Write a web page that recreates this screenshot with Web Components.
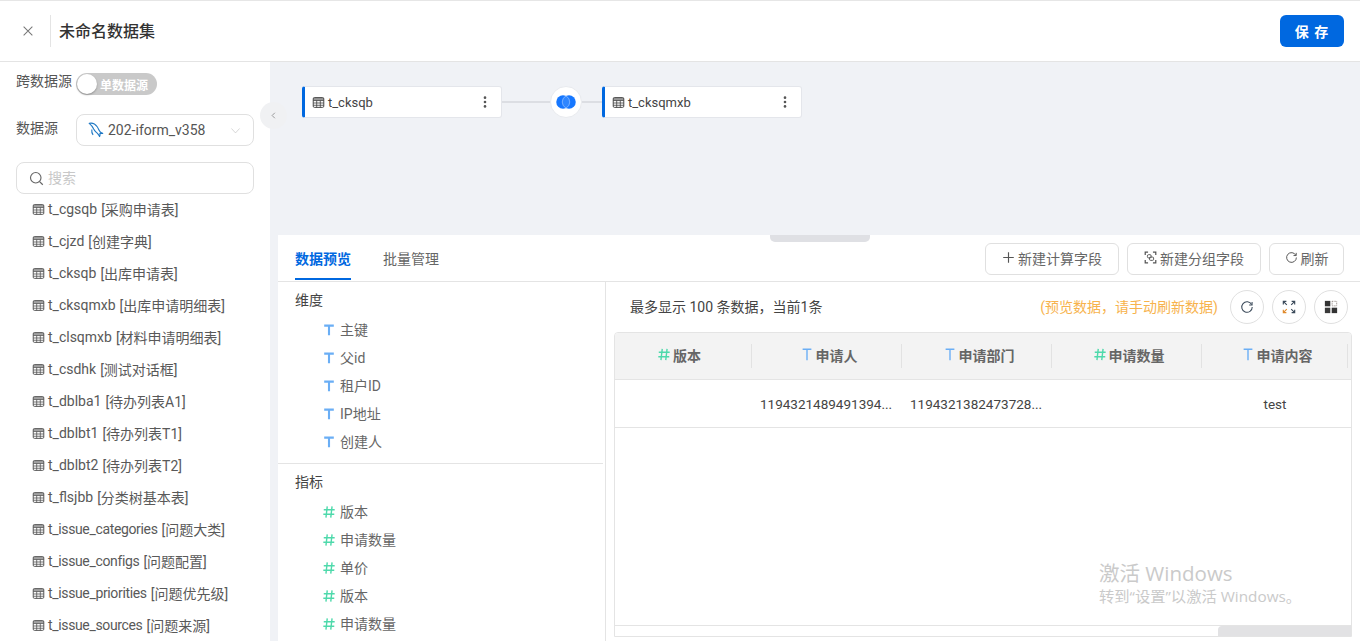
<!DOCTYPE html>
<html lang="zh">
<head>
<meta charset="utf-8">
<title>未命名数据集</title>
<style>
  html, body { margin: 0; height: 641px; overflow: hidden; background: #fff; }
  body { font-family: Roboto, "Noto Sans CJK SC", sans-serif; font-size: 14px; color: #333; }
</style>
</head>
<body>
<ds-app></ds-app>

<script>
// icon paths, all drawn on a 16 x 16 box
const ICONS = {
  close: '<path d="M3 3l10 10M13 3L3 13" stroke="currentColor" stroke-width="1.2" fill="none"/>',
  chevronDown: '<path d="M2 5l6 6.5L14 5" stroke="currentColor" stroke-width="1" fill="none"/>',
  chevronLeft: '<path d="M10 4L6 8l4 4" stroke="currentColor" stroke-width="1.2" fill="none"/>',
  search: '<circle cx="7.2" cy="7.2" r="5.6" stroke="currentColor" stroke-width="1.2" fill="none"/><path d="M11.3 11.3l3.4 3.4" stroke="currentColor" stroke-width="1.3" fill="none"/>',
  table: '<rect x="1.5" y="2" width="13" height="12" rx="1.5" stroke="currentColor" stroke-width="1.2" fill="none"/><path d="M1.5 5.6h13M1.5 8.6h13M1.5 11.4h13M5.8 5.6V14M10.2 5.6V14" stroke="currentColor" stroke-width="1" fill="none"/><rect x="1.5" y="2" width="13" height="3.4" fill="currentColor" opacity=".55"/>',
  dots: '<circle cx="8" cy="3" r="1.5" fill="currentColor"/><circle cx="8" cy="8" r="1.5" fill="currentColor"/><circle cx="8" cy="13" r="1.5" fill="currentColor"/>',
  dolphin: '<path d="M1.2 1.4c3-.8 6 .6 8 3.4 1.2 1.7 1.6 3.6 3 5 .7.7 1.6 1.2 2.6 1.6-1 .2-2 .1-2.9-.2.2 1 .1 2.4-.3 3.4-.5-1.2-1.2-2.3-2.2-3.3-1.5-1.5-2.8-2.3-3.7-4.3C4.9 5 3.2 3 1.2 1.4z" stroke="#1f78c4" stroke-width="1.1" fill="none" stroke-linejoin="round"/><path d="M3.8 7.5c-.3 2 .2 3.8 1.3 5.3" stroke="#1f78c4" stroke-width="1.1" fill="none"/>',
  plus: '<path d="M8 1.5v13M1.5 8h13" stroke="currentColor" stroke-width="1.4" fill="none"/>',
  group: '<path d="M5 1.5H1.5V5M11 1.5h3.5V5M5 14.5H1.5V11M11 14.5h3.5V11" stroke="currentColor" stroke-width="1.5" fill="none"/><rect x="4.2" y="4.5" width="4.6" height="4" rx="1.5" stroke="currentColor" stroke-width="1.2" fill="none"/><rect x="6.8" y="7.5" width="5" height="4" rx="1.2" stroke="currentColor" stroke-width="1.2" fill="none"/>',
  refresh: '<path d="M13.3 5.2A6 6 0 1 0 14 8" stroke="currentColor" stroke-width="1.2" fill="none"/><path d="M13.8 2.3v3.3h-3.3" stroke="currentColor" stroke-width="1.2" fill="none"/>',
  expand: '<g stroke="#3b4a5a" stroke-width="1.3" fill="none"><path d="M1.5 5V1.5H5M1.5 1.5L5.5 5.5"/><path d="M11 1.5h3.5V5M14.5 1.5l-4 4"/><path d="M14.5 11v3.5H11M14.5 14.5l-4-4"/></g><g stroke="#e08a2c" stroke-width="1.3" fill="none"><path d="M5 14.5H1.5V11M1.5 14.5l4-4"/></g>',
  grid: '<rect x="1" y="1" width="6.2" height="6.2" fill="#333"/><rect x="1" y="8.8" width="6.2" height="6.2" fill="#3a3a3a"/><rect x="8.8" y="8.8" width="6.2" height="6.2" fill="#333"/><rect x="9.3" y="1.5" width="5.2" height="5.2" fill="none" stroke="#8a7f7a" stroke-width="1" stroke-dasharray="1 .8"/>',
  text: '<path d="M2.5 3h11M8 3v11" stroke="#6aaef5" stroke-width="2.4" fill="none"/>',
  textThin: '<path d="M3 2h10M8 2v12.5" stroke="#6aaef5" stroke-width="1.6" fill="none"/>',
  number: '<path d="M6 1.5L4.5 14.5M11.5 1.5L10 14.5M2 5.5h12.5M1.5 10.5H14" stroke="#4ed9ab" stroke-width="1.6" fill="none"/>',
  join: '<circle cx="5.6" cy="8" r="5.4" fill="#1677ff"/><circle cx="10.4" cy="8" r="5.4" fill="#1677ff"/><path d="M8 3.16a5.4 5.4 0 0 1 0 9.68 5.4 5.4 0 0 1 0-9.68z" fill="#2f86ff" stroke="#a9ccff" stroke-width=".5"/>'
};

// defines an element whose shadow root comes from a css + html pair
function define(tag, css, html, setup) {
  customElements.define(tag, class extends HTMLElement {
    constructor() {
      super();
      this.attachShadow({ mode: 'open' });
    }
    connectedCallback() {
      const markup = typeof html === 'function' ? html(this) : html;
      this.shadowRoot.innerHTML = `<style>${css}</style>${markup}`;
      if (setup) setup(this);
    }
  });
}

define('ds-icon', `
  :host { display: inline-flex; flex: none; }
  svg { display: block; width: 100%; height: 100%; }
`, el => `<svg viewBox="0 0 16 16" aria-hidden="true">${ICONS[el.getAttribute('name')]}</svg>`);

define('ds-header', `
  :host { display: flex; align-items: center; height: 60px; border-top: 1px solid #e6e6e6; border-bottom: 1px solid #e4e4e4; background: #fff; padding-left: 21px; padding-right: 16px; }
  ds-icon { width: 14px; height: 14px; color: #777; }
  .sep { width: 1px; height: 32px; background: #e4e4e4; margin: 0 8px 0 15px; }
  h1 { margin: 0 0 2px; font-size: 16px; font-weight: 500; color: #333; flex: 1; }
  button { width: 64px; height: 32px; border: 0; border-radius: 6px; background: #0068e0; color: #fff; font: 700 14px Roboto, "Noto Sans CJK SC", sans-serif; letter-spacing: 1px; padding: 0; }
`, `
  <ds-icon name="close"></ds-icon>
  <div class="sep"></div>
  <h1>未命名数据集</h1>
  <button>保 存</button>
`);

define('ds-table-item', `
  :host { display: flex; align-items: center; height: 32px; padding: 0 0 2px 32px; box-sizing: border-box; color: #595959; font-size: 14px; white-space: nowrap; }
  ds-icon { width: 13px; height: 13px; margin-right: 3px; color: #555; }
  .name { margin-right: 4px; }
  :host([tight]) .name { letter-spacing: -.35px; }
`, el => `<ds-icon name="table"></ds-icon><span class="name">${el.getAttribute('name')}</span><slot></slot>`);

define('ds-sidebar', `
  :host { display: block; width: 270px; height: 579px; background: #fff; overflow: hidden; box-sizing: border-box; padding-top: 11px; position: relative; }
  .row { display: flex; align-items: center; padding-left: 16px; color: #555; }
  .label { width: 60px; white-space: nowrap; margin-top: -8px; }
  .label.ds { margin-top: -7px; }
  .switch { position: relative; display: flex; align-items: center; width: 81px; height: 22px; border-radius: 11px; background: #c9c9c9; color: #fff; font-size: 12px; font-weight: 700; padding-left: 24px; box-sizing: border-box; }
  .switch i { position: absolute; left: 1px; top: 1px; width: 20px; height: 20px; border-radius: 50%; background: #fff; box-shadow: 0 1px 2px rgba(0,0,0,.3); }
  .select { display: flex; align-items: center; width: 178px; height: 32px; box-sizing: border-box; border: 1px solid #e0e0e0; border-radius: 8px; padding: 0 12px 0 11px; color: #555; }
  .select ds-icon:first-child { width: 16px; height: 16px; margin-right: 4px; }
  .select span { flex: 1; }
  .select ds-icon:last-child { width: 11px; height: 11px; color: #c4c4c4; }
  .search { display: flex; align-items: center; width: 238px; height: 32px; box-sizing: border-box; border: 1px solid #e0e0e0; border-radius: 8px; margin: 16px 0 0 16px; padding-left: 12px; color: #c8c8c8; }
  .search ds-icon { width: 15px; height: 15px; margin-right: 4px; color: #666; }
  .search span { margin-bottom: 2px; }
`, `
  <div class="row"><span class="label">跨数据源</span><div class="switch"><i></i>单数据源</div></div>
  <div class="row" style="margin-top:19px">
    <span class="label ds">数据源</span>
    <div class="select"><ds-icon name="dolphin"></ds-icon><span>202-iform_v358</span><ds-icon name="chevronDown"></ds-icon></div>
  </div>
  <div class="search"><ds-icon name="search"></ds-icon><span>搜索</span></div>
  <slot></slot>
`);

define('ds-node', `
  :host { display: flex; align-items: center; width: 200px; height: 32px; box-sizing: border-box; background: #fff; border: 1px solid #e4e6eb; border-left: 3px solid #0068e0; border-radius: 3px; padding: 0 9px 0 7px; font-size: 13px; color: #444; flex: none; }
  ds-icon.t { width: 13px; height: 13px; margin-right: 3px; color: #444; }
  span { flex: 1; }
  ds-icon.m { width: 14px; height: 14px; color: #555; }
`, `<ds-icon class="t" name="table"></ds-icon><span><slot></slot></span><ds-icon class="m" name="dots"></ds-icon>`);

define('ds-canvas', `
  :host { display: flex; align-items: center; height: 173px; box-sizing: border-box; padding: 24px 0 117px 32px; }
  .line { height: 2px; background: #dcdee3; flex: none; }
  .join { width: 32px; height: 32px; border-radius: 50%; background: #fff; border: 1px solid #e8eaee; box-sizing: border-box; display: flex; align-items: center; justify-content: center; flex: none; }
  .join ds-icon { width: 20px; height: 20px; }
`, `
  <ds-node>t_cksqb</ds-node>
  <div class="line" style="width:48px"></div>
  <div class="join"><ds-icon name="join"></ds-icon></div>
  <div class="line" style="width:20px"></div>
  <ds-node>t_cksqmxb</ds-node>
`);

define('ds-button', `
  :host { display: inline-flex; align-items: center; justify-content: center; height: 32px; box-sizing: border-box; border: 1px solid #e0e0e0; border-radius: 6px; background: #fff; color: #666; font-size: 14px; white-space: nowrap; padding-bottom: 3px; }
  ds-icon { width: 13px; height: 13px; margin-right: 3px; color: #555; }
`, el => `<ds-icon name="${el.getAttribute('icon')}"></ds-icon><slot></slot>`);

define('ds-round-button', `
  :host { display: flex; align-items: center; justify-content: center; width: 34px; height: 34px; box-sizing: border-box; border: 1px solid #e0e0e0; border-radius: 50%; color: #3b4a5a; flex: none; }
  ds-icon { width: 14px; height: 14px; }
`, el => `<ds-icon name="${el.getAttribute('icon')}"></ds-icon>`);

define('ds-field', `
  :host { display: flex; align-items: center; height: 28px; padding-left: 44px; color: #666; font-size: 14px; }
  ds-icon { width: 14px; height: 14px; margin-right: 4px; }
  span { margin-bottom: 2px; }
`, el => `<ds-icon name="${el.getAttribute('type')}"></ds-icon><span><slot></slot></span>`);

define('ds-field-group', `
  :host { display: block; padding-bottom: 7px; }
  :host(:not(:last-child)) { border-bottom: 1px solid #e4e4e4; }
  h3 { margin: 0 0 2px; padding: 4px 0 0 17px; height: 28px; line-height: 28px; font-size: 14px; font-weight: 400; color: #444; }
`, el => `<h3>${el.getAttribute('title')}</h3><slot></slot>`);

const TABLE_CSS = `
  :host { display: grid; grid-template-columns: 137px 150px 150px 150px 146px 1fr; }
`;

define('ds-head-cell', `
  :host { display: flex; align-items: center; justify-content: center; height: 46px; box-sizing: border-box; position: relative; font-size: 14px; font-weight: 700; color: #666; padding-left: 3px; }
  :host::after { content: ""; position: absolute; right: 0; top: 11px; bottom: 11px; width: 1px; background: #e2e2e2; }
  ds-icon { width: 14px; height: 15px; margin: -3px 2px 0 0; }
  span { margin-bottom: 2px; }
`, el => `<ds-icon name="${el.getAttribute('type')}"></ds-icon><span><slot></slot></span>`);

define('ds-body-cell', `
  :host { display: block; height: 47px; line-height: 48px; box-sizing: border-box; padding: 0 8px; text-align: center; font-size: 13.5px; color: #444; white-space: nowrap; }
  :host([long]) { text-align: left; }
`, `<slot></slot>`);

define('ds-row', TABLE_CSS, `<slot></slot>`);

define('ds-preview', `
  :host { display: flex; flex-direction: column; flex: 1; min-width: 0; height: 359px; box-sizing: border-box; }
  .bar { display: flex; align-items: center; height: 50px; flex: none; padding: 0 12px 0 24px; gap: 8px; }
  .count { flex: 1; color: #444; font-size: 14px; margin-bottom: 2px; }
  .hint { color: #f7b34d; font-size: 14px; margin: 0 4px 2px 0; }
  .table { flex: none; height: 305px; margin: 0 8px; border: 1px solid #e4e4e4; border-radius: 4px 4px 0 0; box-sizing: border-box; display: flex; flex-direction: column; overflow: hidden; }
  .head { background: #f3f3f3; border-bottom: 1px solid #e4e4e4; flex: none; }
  .body { border-bottom: 1px solid #e4e4e4; flex: none; }
  .spacer { flex: 1; border-bottom: 1px solid #e4e4e4; }
  .track { height: 10px; flex: none; display: flex; justify-content: flex-end; }
  .track i { display: block; width: 133px; background: #e2e2e4; border-radius: 4px 0 0 0; }
`, `
  <div class="bar">
    <span class="count">最多显示 100 条数据，当前1条</span>
    <span class="hint">(预览数据，请手动刷新数据)</span>
    <ds-round-button icon="refresh"></ds-round-button>
    <ds-round-button icon="expand"></ds-round-button>
    <ds-round-button icon="grid"></ds-round-button>
  </div>
  <div class="table">
    <div class="head"><slot name="head"></slot></div>
    <div class="body"><slot name="body"></slot></div>
    <div class="spacer"></div>
    <div class="track"><i></i></div>
  </div>
`);

define('ds-panel', `
  :host { display: block; position: relative; margin-left: 8px; height: 406px; background: #fff; overflow: hidden; }
  .handle { position: absolute; left: 492px; top: 0; width: 100px; height: 7px; background: #dfe0e4; border-radius: 0 0 5px 5px; }
  .top { display: flex; align-items: center; height: 47px; box-sizing: border-box; border-bottom: 1px solid #e4e4e4; padding: 8px 16px 6px 17px; }
  .tab { position: relative; height: 40px; line-height: 36px; margin-right: 32px; color: #666; font-size: 14px; top: 2px; }
  .tab.on { color: #0068e0; font-weight: 700; }
  .tab.on::after { content: ""; position: absolute; left: 0; right: 0; bottom: 1px; height: 2px; background: #0068e0; }
  .actions { margin-left: auto; display: flex; gap: 8px; }
  .content { display: flex; }
  .fields { width: 328px; height: 359px; box-sizing: border-box; border-right: 1px solid #e4e4e4; flex: none; padding-right: 2px; }
`, `
  <div class="handle"></div>
  <div class="top">
    <div class="tab on">数据预览</div>
    <div class="tab">批量管理</div>
    <div class="actions"><slot name="actions"></slot></div>
  </div>
  <div class="content">
    <div class="fields"><slot name="fields"></slot></div>
    <slot name="preview"></slot>
  </div>
`);

define('ds-watermark', `
  :host { position: absolute; left: 1099px; top: 559px; color: #cacaca; pointer-events: none; font-family: "Open Sans", "Noto Sans CJK SC", sans-serif; white-space: nowrap; }
  div { font-size: 20.5px; line-height: 28px; }
  small { display: block; font-size: 15.3px; line-height: 20px; margin-top: -1px; }
`, `<div>激活 Windows</div><small>转到“设置”以激活 Windows。</small>`);

const SOURCE_TABLES = [['t_cgsqb', '采购申请表'], ['t_cjzd', '创建字典'], ['t_cksqb', '出库申请表'], ['t_cksqmxb', '出库申请明细表'], ['t_clsqmxb', '材料申请明细表'], ['t_csdhk', '测试对话框'], ['t_dblba1', '待办列表A1'], ['t_dblbt1', '待办列表T1'], ['t_dblbt2', '待办列表T2'], ['t_flsjbb', '分类树基本表'], ['t_issue_categories', '问题大类'], ['t_issue_configs', '问题配置'], ['t_issue_priorities', '问题优先级'], ['t_issue_sources', '问题来源']];
const DIMENSIONS = ['主键', '父id', '租户ID', 'IP地址', '创建人'];
const MEASURES = ['版本', '申请数量', '单价', '版本', '申请数量'];
const COLUMNS = [['number', '版本'], ['textThin', '申请人'], ['textThin', '申请部门'], ['number', '申请数量'], ['textThin', '申请内容']];
const ROW = ['', '1194321489491394...', '1194321382473728...', '', 'test'];

define('ds-app', `
  :host { display: block; position: relative; width: 1360px; height: 641px; overflow: hidden; }
  .main { display: flex; height: 579px; }
  .work { flex: 1; min-width: 0; background: #f0f2f6; }
  .toggle { position: absolute; left: 260px; top: 102px; width: 27px; height: 27px; border-radius: 50%; background: #f0f1f3; display: flex; align-items: center; justify-content: center; color: #888; }
  .toggle ds-icon { width: 11px; height: 11px; }
  ds-row ds-head-cell:first-child { padding: 0 9px 0 0; }
`, () => `
  <ds-header></ds-header>
  <div class="main">
    <ds-sidebar>${SOURCE_TABLES.map(t => `<ds-table-item name="${t[0]}"${t[0].startsWith('t_issue') ? ' tight' : ''}>[${t[1]}]</ds-table-item>`).join('')}</ds-sidebar>
    <div class="work">
      <ds-canvas></ds-canvas>
      <ds-panel>
        <ds-button slot="actions" icon="plus" style="width:134px">新建计算字段</ds-button>
        <ds-button slot="actions" icon="group" style="width:134px">新建分组字段</ds-button>
        <ds-button slot="actions" icon="refresh" style="width:75px">刷新</ds-button>
        <ds-field-group slot="fields" title="维度">${DIMENSIONS.map(f => `<ds-field type="text">${f}</ds-field>`).join('')}</ds-field-group>
        <ds-field-group slot="fields" title="指标">${MEASURES.map(f => `<ds-field type="number">${f}</ds-field>`).join('')}</ds-field-group>
        <ds-preview slot="preview">
          <ds-row slot="head">${COLUMNS.map(c => `<ds-head-cell type="${c[0]}">${c[1]}</ds-head-cell>`).join('')}</ds-row>
          <ds-row slot="body">${ROW.map(c => `<ds-body-cell${c.length > 4 ? ' long' : ''}>${c}</ds-body-cell>`).join('')}</ds-row>
        </ds-preview>
      </ds-panel>
    </div>
  </div>
  <div class="toggle"><ds-icon name="chevronLeft"></ds-icon></div>
  <ds-watermark></ds-watermark>
`);
</script>
</body>
</html>
